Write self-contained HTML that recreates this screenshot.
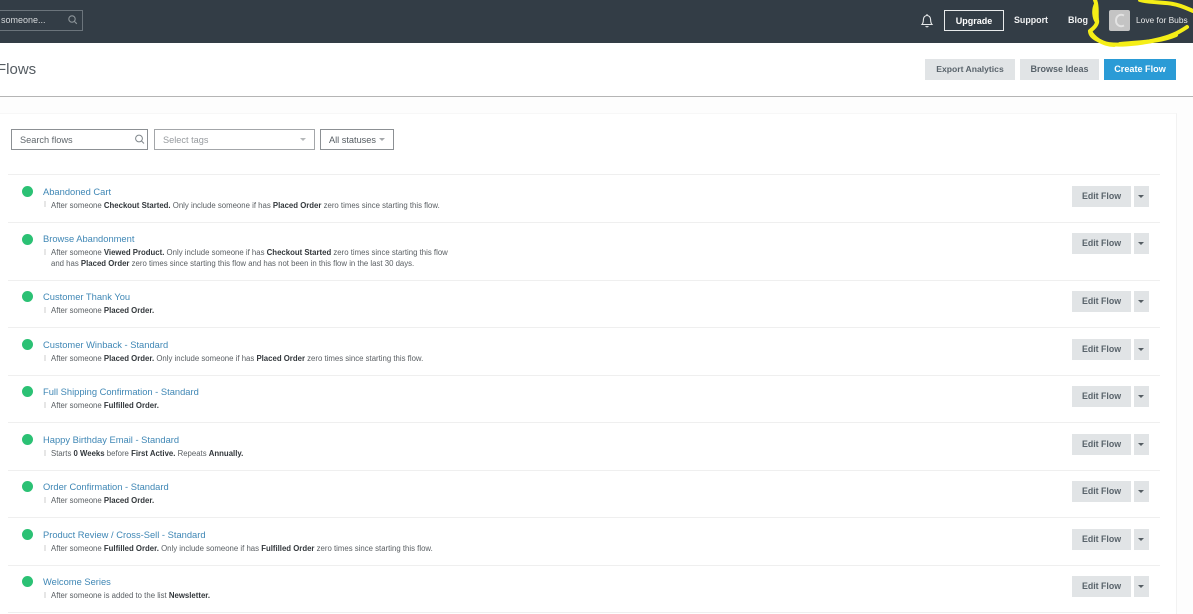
<!DOCTYPE html>
<html><head><meta charset="utf-8"><style>
*{box-sizing:border-box}
html,body{margin:0;padding:0;background:#fff}
body{width:1193px;height:614px;position:relative;overflow:hidden;font-family:"Liberation Sans",sans-serif;filter:blur(.3px)}
.a{position:absolute;white-space:nowrap}
.btn{position:absolute;background:#e1e4e6;color:#59636b;font-size:8.8px;font-weight:bold;text-align:center;height:21px;line-height:21px}
.line{position:absolute;left:8px;width:1152px;height:1px;background:#efefef}
.dot{position:absolute;left:22px;width:11px;height:11px;border-radius:50%;background:#2bc174}
.name{position:absolute;left:43px;color:#3f87b5;font-size:9.35px;line-height:12px;white-space:nowrap}
.desc{position:absolute;left:51px;color:#5a5f63;font-size:7.8px;line-height:11px;white-space:nowrap}
.desc b{color:#33383c}
.pin{position:absolute;left:44px;width:2px;height:6px;background:#e6e6e6}
.edit{position:absolute;left:1072px;width:59px;height:21px;background:#e1e4e6;color:#59636b;font-size:8.8px;font-weight:bold;text-align:center;line-height:21px}
.car{position:absolute;left:1134px;width:15px;height:21px;background:#e1e4e6}
.car:after{content:"";position:absolute;left:4px;top:9px;border:3px solid transparent;border-top:3px solid #555d63;border-bottom:0}
</style></head><body>
<div class="a" style="left:0;top:0;width:1193px;height:43px;background:#333d46"></div>
<div class="a" style="left:-10px;top:10px;width:93px;height:21px;border:1px solid #6b747b"></div>
<div class="a" style="left:1px;top:14px;color:#d5d8da;font-size:9px;line-height:12px">someone...</div>
<svg class="a" style="left:67px;top:14px" width="12" height="12" viewBox="0 0 12 12" fill="none" stroke="#8d959a" stroke-width="1.1"><circle cx="5" cy="5" r="3.2"/><path d="M7.4 7.4L9.8 9.8"/></svg>
<svg class="a" style="left:920px;top:13px" width="14" height="15" viewBox="0 0 14 15" fill="none" stroke="#e8eaeb" stroke-width="1.1"><path d="M2 11.5C3.3 10 3.4 8.5 3.4 6.5C3.4 4.2 5 2.5 7 2.5C9 2.5 10.6 4.2 10.6 6.5C10.6 8.5 10.7 10 12 11.5Z"/><path d="M5.6 13.2C6.3 14 7.7 14 8.4 13.2M7 1V2.5"/></svg>
<div class="a" style="left:944px;top:10px;width:60px;height:21px;border:1px solid #e8eaeb;color:#fff;font-size:9px;font-weight:bold;text-align:center;line-height:20px">Upgrade</div>
<div class="a" style="left:1014px;top:14px;color:#f0f1f2;font-size:8.9px;font-weight:bold;line-height:12px">Support</div>
<div class="a" style="left:1068px;top:14px;color:#f0f1f2;font-size:9px;font-weight:bold;line-height:12px">Blog</div>
<div class="a" style="left:1109px;top:10px;width:21px;height:21px;background:#c4c4c4;border-radius:2px"></div>
<svg class="a" style="left:1109px;top:10px" width="21" height="21" viewBox="0 0 21 21" fill="none" stroke="#e3e3e3" stroke-width="2"><path d="M15 5.5C11 3.5 7 6 7 10.5C7 15 11 17.5 15 15.5"/></svg>
<div class="a" style="left:1136px;top:15px;color:#e8e9ea;font-size:8.4px;line-height:11px">Love for Bubs</div>
<svg class="a" style="left:1080px;top:0" width="113" height="55" viewBox="0 0 113 55" fill="none" stroke="#f5ee17" stroke-width="4" stroke-linecap="round" stroke-linejoin="round"><path d="M15 0C18 7 16 14 17 20C18 24 14 28 10 31C10 36 15 39 22 42C32 47 60 44 76 40C90 37 98 33 107 27"/><path d="M16 4C13 10 14 18 17 22M10 31C13 37 22 45 34 45M60 0C70 3 85 2 93 4C100 5 106 8 113 11M40 44C60 42 80 42 96 35"/></svg>
<div class="a" style="left:-3px;top:60px;color:#555c62;font-size:15px;line-height:20px">Flows</div>
<div class="btn" style="left:925px;top:59px;width:90px;font-size:8.6px">Export Analytics</div>
<div class="btn" style="left:1020px;top:59px;width:79px;font-size:9px">Browse Ideas</div>
<div class="btn" style="left:1104px;top:59px;width:72px;background:#2a9bd6;color:#fff;font-size:9.1px">Create Flow</div>
<div class="a" style="left:0;top:96px;width:1193px;height:1px;background:#b5b5b5"></div>
<div class="a" style="left:0;top:97px;width:1193px;height:517px;background:#fdfdfd"></div>
<div class="a" style="left:0;top:113px;width:1177px;height:501px;background:#fff;border-right:1px solid #f2f2f2;border-top:1px solid #f7f7f7"></div>
<div class="a" style="left:11px;top:129px;width:137px;height:21px;border:1px solid #8c9094;background:#fff"></div>
<div class="a" style="left:20px;top:134px;color:#60676c;font-size:9.2px;line-height:12px">Search flows</div>
<svg class="a" style="left:133px;top:133px" width="13" height="13" viewBox="0 0 13 13" fill="none" stroke="#7f868b" stroke-width="1"><circle cx="6" cy="5.5" r="3.4"/><path d="M8.5 8L11 10.5"/></svg>
<div class="a" style="left:154px;top:129px;width:161px;height:21px;border:1px solid #a3a6a9;background:#fff"></div>
<div class="a" style="left:163px;top:134px;color:#969a9e;font-size:9.2px;line-height:12px">Select tags</div>
<div class="a" style="left:300px;top:138px;border:3px solid transparent;border-top:3px solid #b5b8ba;border-bottom:0"></div>
<div class="a" style="left:320px;top:129px;width:74px;height:21px;border:1px solid #8c9094;background:#fff"></div>
<div class="a" style="left:329px;top:134px;color:#555c62;font-size:9.2px;line-height:12px">All statuses</div>
<div class="a" style="left:379px;top:138px;border:3px solid transparent;border-top:3px solid #a5a8ab;border-bottom:0"></div>

<div class="line" style="top:174px"></div>
<div class="dot" style="top:186px"></div><div class="name" style="top:186px">Abandoned Cart</div><div class="pin" style="top:201px"></div>
<div class="desc" style="top:200px">After someone <b>Checkout Started.</b> Only include someone if has <b>Placed Order</b> zero times since starting this flow.</div>
<div class="edit" style="top:186px">Edit Flow</div><div class="car" style="top:186px"></div>

<div class="line" style="top:222px"></div>
<div class="dot" style="top:234px"></div><div class="name" style="top:233px">Browse Abandonment</div><div class="pin" style="top:249px"></div>
<div class="desc" style="top:247px">After someone <b>Viewed Product.</b> Only include someone if has <b>Checkout Started</b> zero times since starting this flow</div>
<div class="desc" style="top:258px">and has <b>Placed Order</b> zero times since starting this flow and has not been in this flow in the last 30 days.</div>
<div class="edit" style="top:233px">Edit Flow</div><div class="car" style="top:233px"></div>

<div class="line" style="top:280px"></div>
<div class="dot" style="top:291px"></div><div class="name" style="top:291px">Customer Thank You</div><div class="pin" style="top:307px"></div>
<div class="desc" style="top:305px">After someone <b>Placed Order.</b></div>
<div class="edit" style="top:291px">Edit Flow</div><div class="car" style="top:291px"></div>

<div class="line" style="top:327px"></div>
<div class="dot" style="top:339px"></div><div class="name" style="top:339px">Customer Winback - Standard</div><div class="pin" style="top:355px"></div>
<div class="desc" style="top:353px">After someone <b>Placed Order.</b> Only include someone if has <b>Placed Order</b> zero times since starting this flow.</div>
<div class="edit" style="top:339px">Edit Flow</div><div class="car" style="top:339px"></div>

<div class="line" style="top:375px"></div>
<div class="dot" style="top:386px"></div><div class="name" style="top:386px">Full Shipping Confirmation - Standard</div><div class="pin" style="top:402px"></div>
<div class="desc" style="top:400px">After someone <b>Fulfilled Order.</b></div>
<div class="edit" style="top:386px">Edit Flow</div><div class="car" style="top:386px"></div>

<div class="line" style="top:422px"></div>
<div class="dot" style="top:434px"></div><div class="name" style="top:434px">Happy Birthday Email - Standard</div><div class="pin" style="top:450px"></div>
<div class="desc" style="top:448px">Starts <b>0 Weeks</b> before <b>First Active.</b> Repeats <b>Annually.</b></div>
<div class="edit" style="top:434px">Edit Flow</div><div class="car" style="top:434px"></div>

<div class="line" style="top:470px"></div>
<div class="dot" style="top:481px"></div><div class="name" style="top:481px">Order Confirmation - Standard</div><div class="pin" style="top:497px"></div>
<div class="desc" style="top:495px">After someone <b>Placed Order.</b></div>
<div class="edit" style="top:481px">Edit Flow</div><div class="car" style="top:481px"></div>

<div class="line" style="top:517px"></div>
<div class="dot" style="top:529px"></div><div class="name" style="top:529px">Product Review / Cross-Sell - Standard</div><div class="pin" style="top:545px"></div>
<div class="desc" style="top:543px">After someone <b>Fulfilled Order.</b> Only include someone if has <b>Fulfilled Order</b> zero times since starting this flow.</div>
<div class="edit" style="top:529px">Edit Flow</div><div class="car" style="top:529px"></div>

<div class="line" style="top:565px"></div>
<div class="dot" style="top:576px"></div><div class="name" style="top:576px">Welcome Series</div><div class="pin" style="top:592px"></div>
<div class="desc" style="top:590px">After someone is added to the list <b>Newsletter.</b></div>
<div class="edit" style="top:576px">Edit Flow</div><div class="car" style="top:576px"></div>

<div class="line" style="top:612px"></div>
</body></html>
